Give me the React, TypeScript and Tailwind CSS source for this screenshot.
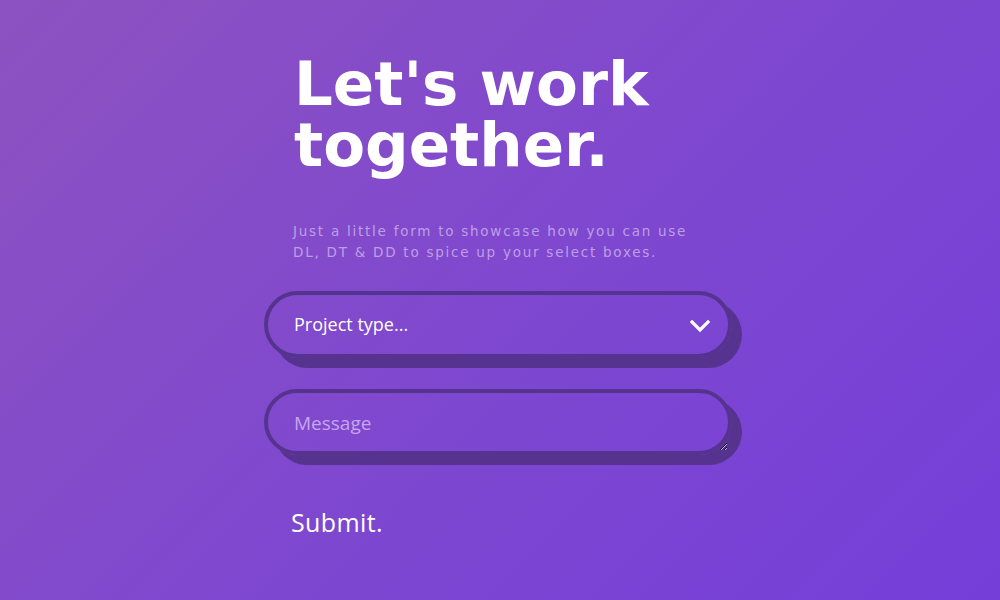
import React from "react";

export default function App() {
  return (
    <div className="w-[1000px] h-[600px] overflow-hidden bg-[linear-gradient(135deg,#8d52c0_0%,#7f48cf_50%,#753ed9_100%)] font-['DejaVu_Sans',sans-serif]">
      <div className="w-[472px] ml-[264px] pt-[53px]">
        <h1 className="pl-[30px] text-[61px] leading-[61px] font-bold text-white">
          Let's work
          <br />
          together.
        </h1>
        <p className="pl-[29px] mt-[46px] text-[13.5px] leading-[21px] tracking-[1.75px] text-[#bd9fe6]">
          Just a little form to showcase how you can use
          <br />
          DL, DT &amp; DD to spice up your select boxes.
        </p>
        <div className="mt-[28px] h-[67px] w-[468px] rounded-full border-4 border-[#56338f] shadow-[10px_10px_0_#56338f] flex items-center justify-between pl-[26px] pr-[18px]">
          <span className="text-[18px] text-white font-['Open_Sans',sans-serif]">Project type...</span>
          <svg width="20" height="14" viewBox="0 0 20 14" className="mt-[2px]">
            <path d="M2 3 L10 11 L18 3" fill="none" stroke="white" strokeWidth="3.2" strokeLinecap="square" />
          </svg>
        </div>
        <textarea
          placeholder="Message"
          className="mt-[31px] block h-[66px] w-[468px] rounded-full border-4 border-[#56338f] shadow-[10px_10px_0_#56338f] bg-transparent pl-[26px] pt-[16px] text-[19px] text-white placeholder:text-[#c6a6ee] font-['Open_Sans',sans-serif] outline-none"
        />
        <div className="mt-[52px] pl-[27px] text-[25px] leading-[30px] tracking-[0.4px] text-white font-['Open_Sans',sans-serif]">Submit.</div>
      </div>
    </div>
  );
}
